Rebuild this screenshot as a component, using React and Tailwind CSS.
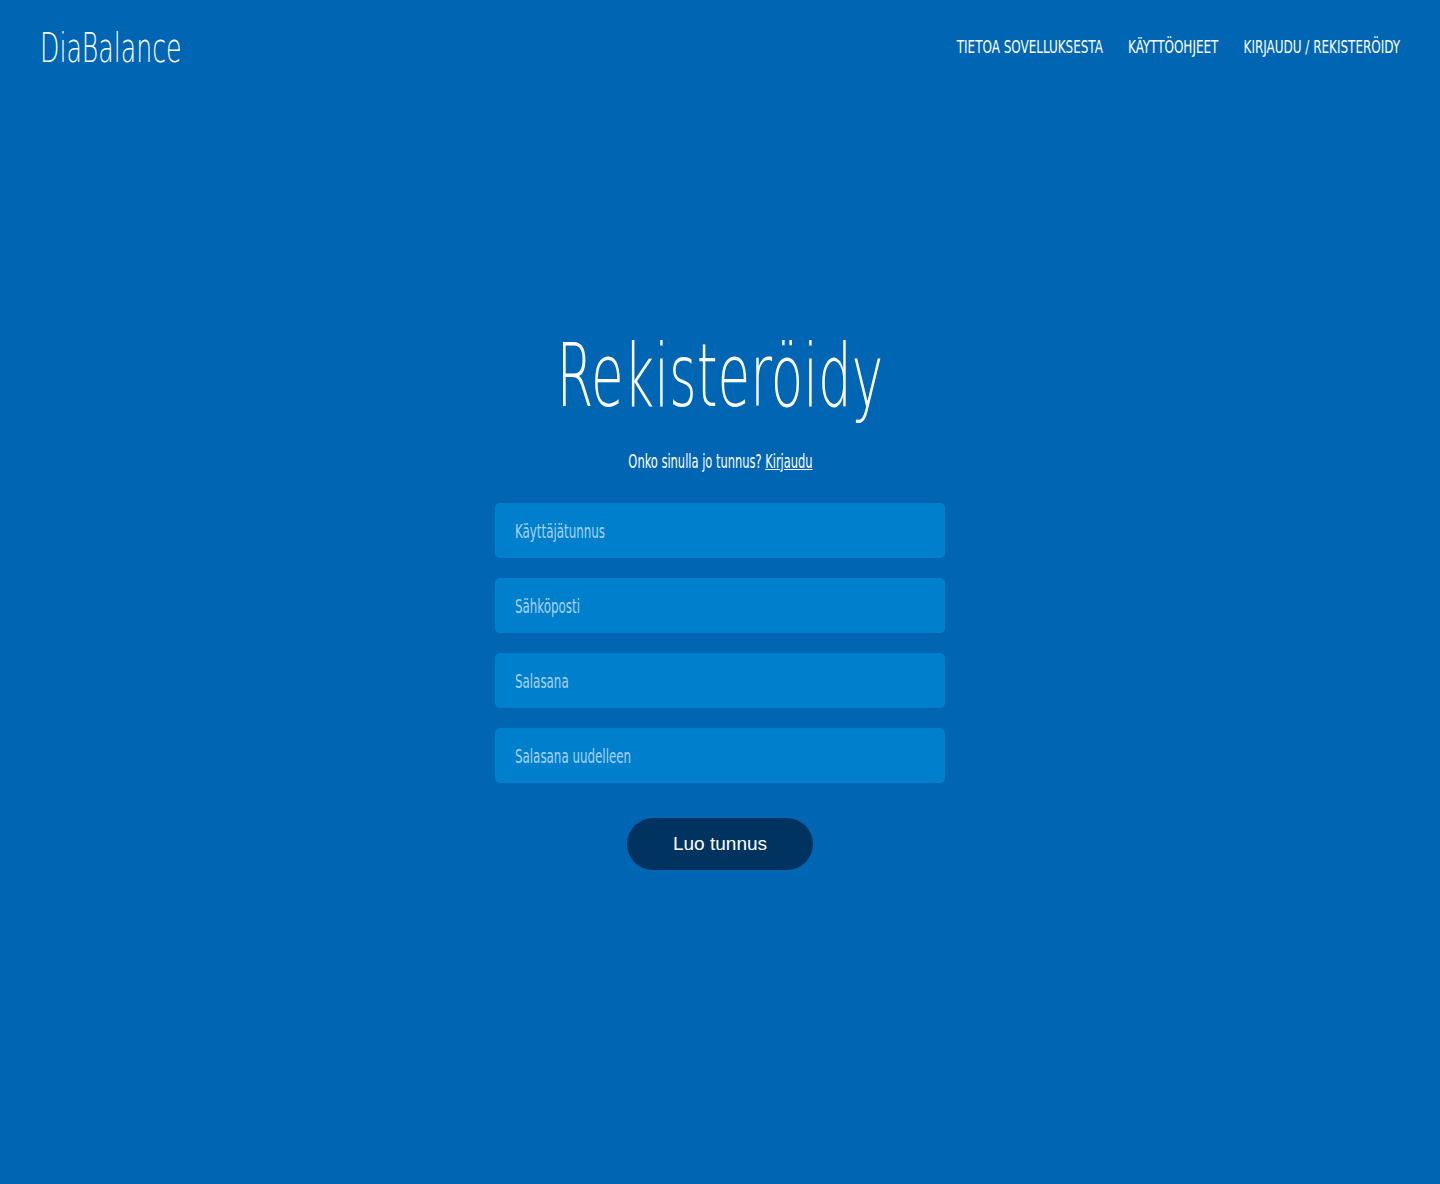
import React from 'react';

const narrow = { fontFamily: '"DejaVu Sans Condensed", "Liberation Sans", sans-serif' };
const thin = { fontFamily: '"DejaVu Sans", "Liberation Sans", sans-serif' };

const fields = [
    { name: 'username', placeholder: 'Käyttäjätunnus', type: 'text' },
    { name: 'email', placeholder: 'Sähköposti', type: 'email' },
    { name: 'password', placeholder: 'Salasana', type: 'password' },
    { name: 'password2', placeholder: 'Salasana uudelleen', type: 'password' },
];

const App = () => {
    return (
        <div className="min-h-[1184px] w-full bg-[#0066b3] text-white" style={narrow}>
            <header className="flex items-center justify-between px-10 pt-[24px]">
                <a href="#" className="inline-block origin-left scale-x-[0.63] whitespace-nowrap text-[40px] font-extralight leading-[48px]" style={thin}>
                    DiaBalance
                </a>
                <nav className="-mt-[3px] flex origin-right scale-x-[0.74] items-center gap-[34px] whitespace-nowrap text-[18px] uppercase">
                    <a href="#">Tietoa sovelluksesta</a>
                    <a href="#">Käyttöohjeet</a>
                    <a href="#">Kirjaudu / Rekisteröidy</a>
                </nav>
            </header>

            <main className="flex flex-col items-center pt-[254px]">
                <h1 className="inline-block scale-x-[0.61] whitespace-nowrap text-[87px] font-extralight leading-[100px]" style={thin}>
                    Rekisteröidy
                </h1>
                <p className="mt-[23px] inline-block scale-x-[0.67] whitespace-nowrap text-[19px] leading-[24px]">
                    Onko sinulla jo tunnus? <a href="#" className="underline">Kirjaudu</a>
                </p>
                <form className="mt-[30px] flex w-[450px] flex-col gap-5">
                    {fields.map((f) => (
                        <div key={f.name} className="h-[55px] w-full overflow-hidden rounded-[5px] bg-[#0080cc] px-5">
                            <input
                                name={f.name}
                                type={f.type}
                                placeholder={f.placeholder}
                                className="h-full w-[620px] origin-left scale-x-[0.66] bg-transparent text-[20px] text-white outline-none placeholder:text-[#a9d3ef]"
                                style={narrow}
                            />
                        </div>
                    ))}
                    <button
                        type="button"
                        className="mx-auto mt-[15px] h-[52px] w-[186px] rounded-full bg-[#00335f] text-[19px] text-white"
                        style={{ fontFamily: '"Liberation Sans", Arial, sans-serif' }}
                    >
                        Luo tunnus
                    </button>
                </form>
            </main>
        </div>
    );
};

export default App;
